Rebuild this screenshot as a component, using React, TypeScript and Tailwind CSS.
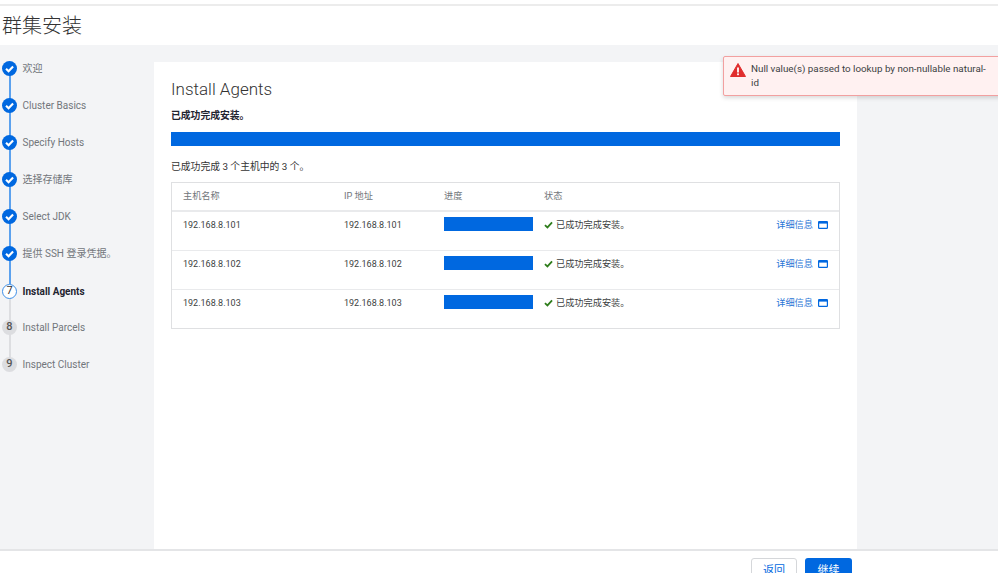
import React from "react";

const font = { fontFamily: '"Roboto","Noto Sans CJK SC",sans-serif' };

const steps = [
  { label: "欢迎", state: "done" },
  { label: "Cluster Basics", state: "done" },
  { label: "Specify Hosts", state: "done" },
  { label: "选择存储库", state: "done" },
  { label: "Select JDK", state: "done" },
  { label: "提供 SSH 登录凭据。", state: "done" },
  { label: "Install Agents", state: "active" },
  { label: "Install Parcels", state: "todo" },
  { label: "Inspect Cluster", state: "todo" },
];

function StepIcon({ state, n }: { state: string; n: number }) {
  if (state === "done") {
    return (
      <svg width="15" height="15" viewBox="0 0 16 16" className="block shrink-0">
        <circle cx="8" cy="8" r="8" fill="#0068e0" />
        <path d="M4.3 8.3 L7 10.9 L11.8 5.9" fill="none" stroke="#fff" strokeWidth="2.3" />
      </svg>
    );
  }
  if (state === "active") {
    return (
      <div className="flex h-[15px] w-[15px] shrink-0 items-center justify-center rounded-full border border-[#3d8fe8] bg-white text-[11px] text-[#333]">
        {n}
      </div>
    );
  }
  return (
    <div className="flex h-[15px] w-[15px] shrink-0 items-center justify-center rounded-full bg-[#dcdde0] text-[11px] font-medium text-[#555]">
      {n}
    </div>
  );
}

function Step({ label, state, n, last }: { label: string; state: string; n: number; last: boolean }) {
  const lineColor = state === "done" ? "bg-[#5ba1ee]" : "bg-[#dddee1]";
  return (
    <div className={`relative flex items-start gap-[5.5px] pl-[2px] ${n === 7 ? "h-[36px]" : "h-[37.1px]"}`}>
      {!last && <div className={`absolute left-[9px] top-[14px] h-[24px] w-[2px] ${lineColor}`} />}
      <div className="relative">
        <StepIcon state={state} n={n} />
      </div>
      <span
        className={`mt-px text-[10px] leading-[13px] ${
          state === "active" ? "font-bold text-[#1f2430]" : "text-[#72767b]"
        }`}
      >
        {label}
      </span>
    </div>
  );
}

function HostRow({ n }: { n: number }) {
  return (
    <div
      className={`grid h-[39px] grid-cols-[161px_100px_100px_1fr_auto] items-start pl-[11px] pr-[11px] pt-[5px] text-[9.2px] leading-[13px] text-[#3c3f42] ${
        n === 103 ? "" : "border-b border-[#e9eaec]"
      }`}
    >
      <span className="pt-[2px] text-[9px]">192.168.8.{n}</span>
      <span className="pt-[2px] text-[9px]">192.168.8.{n}</span>
      <div className="h-[14px] w-[89px] bg-[#0068e0]" />
      <span className="flex items-center gap-[3px] pt-px">
        <svg width="9" height="8" viewBox="0 0 10 9">
          <path d="M1 4.6 L3.8 7.2 L9 1.5" fill="none" stroke="#2f7d1c" strokeWidth="2" />
        </svg>
        已成功完成安装。
      </span>
      <span className="flex items-center gap-[5px] pt-px text-[#2a76d6]">
        详细信息
        <svg width="10" height="8" viewBox="0 0 10 8">
          <rect x="0.6" y="0.6" width="8.8" height="6.8" rx="0.6" fill="none" stroke="#0068e0" strokeWidth="1.2" />
          <rect x="0.6" y="0.6" width="8.8" height="2" fill="#0068e0" />
        </svg>
      </span>
    </div>
  );
}

export default function App() {
  return (
    <div className="relative flex h-[573px] w-[998px] flex-col overflow-hidden bg-white" style={font}>
      <div className="h-[6px] shrink-0 border-b-2 border-[#ececec] bg-white" />
      <div className="flex h-[39px] shrink-0 items-center pl-[2px] text-[20px] font-light text-[#333]">群集安装</div>

      <div className="flex h-[504px] shrink-0 bg-[#f3f4f6]">
        <div className="w-[154px] shrink-0 pt-[16px]">
          {steps.map((s, i) => (
            <Step key={s.label} label={s.label} state={s.state} n={i + 1} last={i === steps.length - 1} />
          ))}
        </div>
        <div className="mt-[17px] w-[703px] bg-white pl-[17px] pr-[17px] pt-[16px]">
          <div className="text-[17px] font-light leading-[22px] text-[#333]">Install Agents</div>
          <div className="mt-[9px] text-[9.8px] font-bold leading-[13px] text-[#1f2430]">已成功完成安装。</div>
          <div className="mt-[10px] h-[14px] bg-[#0068e0]" />
          <div className="mt-[14px] text-[9.8px] leading-[13px] text-[#333]">已成功完成 3 个主机中的 3 个。</div>
          <div className="mt-[9px] h-[147px] border border-[#dfe0e2]">
            <div className="grid h-[29px] grid-cols-[161px_100px_100px_1fr] items-center border-b-2 border-[#e9eaec] pb-[2px] pl-[11px] text-[9.2px] text-[#72767b]">
              <span>主机名称</span>
              <span>IP 地址</span>
              <span>进度</span>
              <span>状态</span>
            </div>
            <HostRow n={101} />
            <HostRow n={102} />
            <HostRow n={103} />
          </div>
        </div>
      </div>

      <div className="flex h-[24px] shrink-0 justify-end gap-[8px] border-t-2 border-[#e4e5e7] bg-white pr-[146px] pt-[7px]">
        <button className="h-[30px] w-[46px] rounded-[3px] border border-[#d5d7da] bg-white pb-[3px] text-[11px] text-[#0068e0]">返回</button>
        <button className="h-[30px] w-[47px] rounded-[3px] bg-[#0068e0] pb-[3px] text-[11px] text-white">继续</button>
      </div>

      <div className="absolute left-[723px] top-[56px] flex h-[40px] w-[290px] items-start gap-[5px] rounded-[2px] border border-[#f2a0a0] bg-[#fff1f1] pl-[6px] pr-[24px] pt-[5px] shadow-[0_2px_4px_rgba(0,0,0,0.15)]">
        <svg width="16" height="14" viewBox="0 0 16 14" className="mt-[1px] shrink-0">
          <path d="M8 0.5 L15.5 13.5 H0.5 Z" fill="#e02d2d" stroke="#e02d2d" strokeLinejoin="round" />
          <rect x="7.1" y="4.5" width="1.8" height="5" fill="#fff" />
          <rect x="7.1" y="10.4" width="1.8" height="1.8" fill="#fff" />
        </svg>
        <span className="text-[9.8px] leading-[13.5px] text-[#3c3f42]">Null value(s) passed to lookup by non-nullable natural-id</span>
      </div>
    </div>
  );
}
